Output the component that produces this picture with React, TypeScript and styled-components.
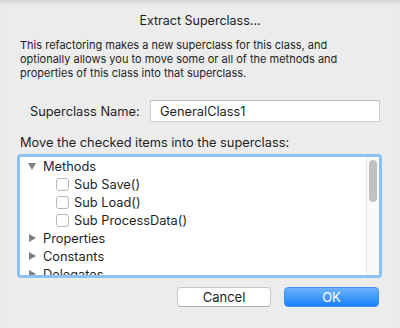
import styled, { createGlobalStyle } from 'styled-components';

const GlobalStyle = createGlobalStyle`
  html, body {
    margin: 0;
    padding: 0;
    background: #ececec;
  }
  * {
    box-sizing: border-box;
  }
`;

const Sheet = styled.div`
  width: 400px;
  height: 328px;
  overflow: hidden;
  background: #ececec;
  box-shadow: inset 0 5px 5px -3px rgba(0, 0, 0, 0.12);
  font-family: Inter, 'Liberation Sans', Arial, sans-serif;
  font-size: 12.8px;
  color: #1f1f1f;
  display: flex;
  flex-direction: column;
`;

const Title = styled.div`
  margin-top: 13px;
  height: 16px;
  line-height: 16px;
  font-size: 12.5px;
  text-align: center;
`;

const Description = styled.p`
  margin: 9px 0 0;
  padding: 0 20px;
  font-size: 11px;
  line-height: 14px;
`;

const NameRow = styled.div`
  display: flex;
  align-items: center;
  margin-top: 20px;
  padding-left: 30px;
  height: 22px;
`;

const Label = styled.label`
  width: 120px;
`;

const NameInput = styled.input`
  width: 230px;
  height: 22px;
  border: 1px solid #cfcfcf;
  border-top-color: #bdbdbd;
  background: #fff;
  font: inherit;
  color: #1f1f1f;
  padding: 0 9px;
  outline: none;
`;

const MoveLabel = styled.div`
  margin-top: 14px;
  padding-left: 20px;
  height: 14px;
  line-height: 14px;
`;

const ListBox = styled.div`
  margin: 4px 0 0 17px;
  width: 365px;
  height: 124px;
  border: 3px solid #8ec1f3;
  border-radius: 4px;
  background: #fff;
  display: flex;
  overflow: hidden;
`;

const Tree = styled.div`
  flex: 1;
  display: flex;
  flex-direction: column;
`;

const Row = styled.div<{ indent?: number }>`
  height: 18px;
  flex: none;
  display: flex;
  align-items: center;
  padding-left: ${(p) => p.indent ?? 8}px;
`;

const Disclosure = styled.span<{ open?: boolean }>`
  width: 0;
  height: 0;
  ${(p) =>
    p.open
      ? `border-left: 4px solid transparent;
         border-right: 4px solid transparent;
         border-top: 7px solid #7f7f7f;
         margin-right: 7px;`
      : `border-top: 4px solid transparent;
         border-bottom: 4px solid transparent;
         border-left: 7px solid #7f7f7f;
         margin-left: 1px;
         margin-right: 7px;`}
`;

const Check = styled.span`
  width: 13px;
  height: 13px;
  border: 1px solid #b8b8b8;
  border-radius: 3px;
  background: #fff;
  margin-right: 5px;
`;

const ScrollTrack = styled.div`
  width: 13px;
  border-left: 1px solid #e6e6e6;
  background: #fafafa;
  padding: 3px 2px 0 2px;
`;

const ScrollThumb = styled.div`
  width: 8px;
  height: 42px;
  border-radius: 4px;
  background: #c1c1c1;
`;

const Buttons = styled.div`
  display: flex;
  justify-content: flex-end;
  gap: 13px;
  padding-right: 21px;
  margin-top: 9px;
`;

const Button = styled.button<{ primary?: boolean }>`
  height: 20px;
  width: ${(p) => (p.primary ? 95 : 94)}px;
  border-radius: 4px;
  font: inherit;
  font-size: 13px;
  padding: 0;
  ${(p) =>
    p.primary
      ? `background: linear-gradient(#6cb3fa, #1a82fb);
         color: #fff;
         border: 1px solid #3d8ff5;`
      : `background: #fff;
         color: #1f1f1f;
         border: 1px solid #c8c8c8;
         border-bottom-color: #b0b0b0;`}
`;

const methods = ['Sub Save()', 'Sub Load()', 'Sub ProcessData()'];
const groups = ['Properties', 'Constants', 'Delegates'];

export default function App() {
  return (
    <>
      <GlobalStyle />
      <Sheet>
        <Title>Extract Superclass...</Title>
        <Description>
          This refactoring makes a new superclass for this class, and
          <br />
          optionally allows you to move some or all of the methods and
          <br />
          properties of this class into that superclass.
        </Description>
        <NameRow>
          <Label>Superclass Name:</Label>
          <NameInput defaultValue="GeneralClass1" />
        </NameRow>
        <MoveLabel>Move the checked items into the superclass:</MoveLabel>
        <ListBox>
          <Tree>
            <Row>
              <Disclosure open />
              Methods
            </Row>
            {methods.map((m) => (
              <Row key={m} indent={36}>
                <Check />
                {m}
              </Row>
            ))}
            {groups.map((g) => (
              <Row key={g}>
                <Disclosure />
                {g}
              </Row>
            ))}
          </Tree>
          <ScrollTrack>
            <ScrollThumb />
          </ScrollTrack>
        </ListBox>
        <Buttons>
          <Button>Cancel</Button>
          <Button primary>OK</Button>
        </Buttons>
      </Sheet>
    </>
  );
}
